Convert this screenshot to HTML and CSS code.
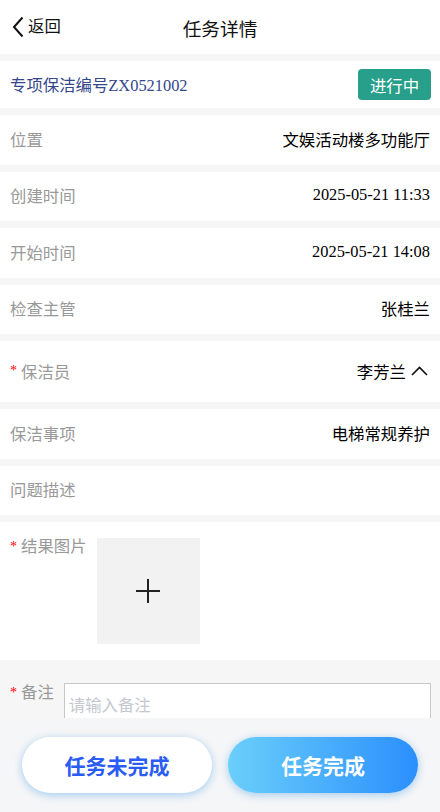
FILE: index.html
```html
<!DOCTYPE html>
<html lang="zh-CN">
<head>
<meta charset="utf-8">
<title>任务详情</title>
<link rel="stylesheet" href="styles.css">
</head>
<body>
<header class="nav">
  <a class="back">
    <svg class="back-icon" width="12" height="22" viewBox="0 0 12 22"><path d="M10.5 1.5 L2 11 L10.5 20.5" fill="none" stroke="#111" stroke-width="2"/></svg>
    <span>返回</span>
  </a>
  <h1 class="title">任务详情</h1>
</header>

<main class="content">
  <div class="row row-head">
    <span class="code">专项保洁编号ZX0521002</span>
    <span class="badge">进行中</span>
  </div>
  <div class="row"><span class="label">位置</span><span class="value">文娱活动楼多功能厅</span></div>
  <div class="row"><span class="label">创建时间</span><span class="value">2025-05-21 11:33</span></div>
  <div class="row"><span class="label">开始时间</span><span class="value">2025-05-21 14:08</span></div>
  <div class="row"><span class="label">检查主管</span><span class="value">张桂兰</span></div>
  <div class="row row-tall">
    <span class="label"><i class="req">*</i>保洁员</span>
    <span class="value picker">李芳兰
      <svg class="up-icon" width="17" height="10" viewBox="0 0 17 10"><path d="M1 9 L8.5 1.5 L16 9" fill="none" stroke="#111" stroke-width="1.6"/></svg>
    </span>
  </div>
  <div class="row"><span class="label">保洁事项</span><span class="value">电梯常规养护</span></div>
  <div class="row"><span class="label">问题描述</span></div>
  <section class="upload-section">
    <span class="label"><i class="req">*</i>结果图片</span>
    <div class="upload-box">
      <svg width="24" height="24" viewBox="0 0 24 24"><path d="M12 0 V24 M0 12 H24" stroke="#222" stroke-width="2"/></svg>
    </div>
  </section>
  <section class="remark">
    <span class="label"><i class="req">*</i>备注</span>
    <textarea class="remark-input" placeholder="请输入备注"></textarea>
  </section>
</main>

<footer class="actions">
  <button class="btn btn-ghost">任务未完成</button>
  <button class="btn btn-primary">任务完成</button>
</footer>
</body>
</html>
```
FILE: styles.css
```css
* { box-sizing: border-box; }
html, body {
  margin: 0;
  padding: 0;
}
body {
  background: #f6f6f6;
  font-family: "Liberation Serif", "Noto Sans CJK SC", serif;
  font-size: 16.4px;
  color: #000;
  height: 812px;
  overflow: hidden;
}
.nav {
  height: 54px;
  background: #fff;
  display: flex;
  align-items: center;
  justify-content: center;
  position: relative;
}
.back {
  position: absolute;
  left: 12px;
  top: 16px;
  display: flex;
  align-items: center;
  gap: 4px;
  font-size: 16.4px;
  color: #111;
  line-height: 22px;
}
.back-icon { display: block; }
.title {
  margin: 0;
  font-size: 18.7px;
  font-weight: normal;
  color: #111;
}
.content {
  display: flex;
  flex-direction: column;
  padding-top: 7px;
  gap: 7px;
}
.row {
  height: 49.5px;
  background: #fff;
  display: flex;
  align-items: center;
  justify-content: space-between;
  padding: 0 10px 2px;
}
.row-head { height: 47px; }
.row-tall { height: 61px; }
.code { color: #34468c; }
.badge {
  background: #289f8a;
  color: #fff;
  border-radius: 4px;
  width: 73px;
  height: 31px;
  display: flex;
  align-items: center;
  justify-content: center;
  margin-right: -1px;
  margin-top: 2px;
}
.label {
  color: #999;
  display: flex;
  align-items: center;
}
.req {
  font-style: normal;
  color: #f00;
  font-size: 14px;
  margin-right: 4px;
}
.value { color: #000; }
.picker {
  display: flex;
  align-items: center;
  gap: 5px;
  margin-right: 2px;
}
.up-icon { display: block; }
.upload-section {
  background: #fff;
  display: flex;
  align-items: flex-start;
  padding: 16px 10px;
  height: 138px;
}
.upload-section .label { line-height: 18px; }
.upload-box {
  margin-left: 10px;
  width: 103px;
  height: 106px;
  background: #f2f2f2;
  display: flex;
  align-items: center;
  justify-content: center;
}
.remark {
  display: flex;
  align-items: flex-start;
  padding: 24px 9px 0 10px;
  margin-top: -7px;
  gap: 10px;
}
.remark .label { line-height: 18px; }
.remark-input {
  flex: 1;
  height: 80px;
  border: 1px solid #c8c8c8;
  background: #fff;
  padding: 8px 4px;
  font-family: "Noto Sans CJK SC", sans-serif;
  font-size: 16.4px;
  resize: none;
  outline: none;
  margin-top: -1px;
}
.remark-input::placeholder { color: #c4c8cf; }
.actions {
  position: fixed;
  left: 0;
  right: 0;
  bottom: 0;
  height: 94px;
  background: #f5f6f7;
  display: flex;
  align-items: center;
  justify-content: center;
  gap: 16px;
}
.btn {
  width: 190px;
  height: 56px;
  border-radius: 28px;
  border: none;
  font-family: "Noto Sans CJK SC", sans-serif;
  font-size: 21px;
  font-weight: bold;
  box-shadow: 0 2px 8px rgba(60, 150, 230, 0.45);
}
.btn-ghost {
  background: #fff;
  color: #2a5cf3;
}
.btn-primary {
  background: linear-gradient(90deg, #6acffa, #2b8ffd);
  color: #fff;
}
```
